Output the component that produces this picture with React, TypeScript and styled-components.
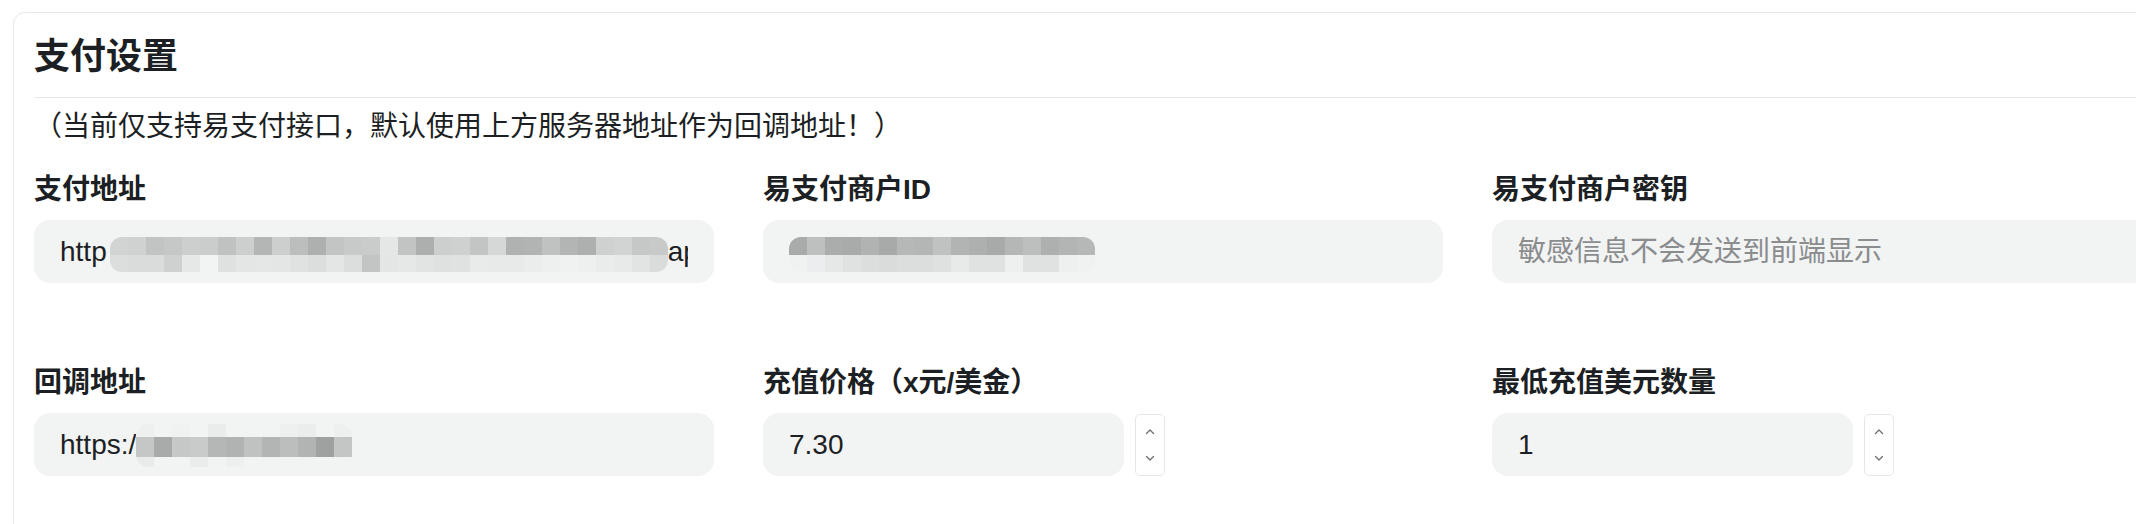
import React from "react";
import styled, { createGlobalStyle } from "styled-components";

const Global = createGlobalStyle`
  html, body { margin: 0; padding: 0; background: #ffffff; overflow: hidden; }
  body { font-family: "Liberation Sans", "Noto Sans CJK SC", sans-serif; color: #1c1f23; }
  * { box-sizing: border-box; }
`;

const Page = styled.div`
  padding: 12px 0 0 13px;
  width: 2136px;
  height: 524px;
  overflow: hidden;
`;

const Card = styled.section`
  width: 2200px;
  border: 1px solid #e8e8e8;
  border-radius: 12px;
  padding: 19px 20px 120px 20px;
  background: #fff;
`;

const Header = styled.div`
  border-bottom: 1px solid #e8e8e8;
  padding-bottom: 15px;
`;

const Title = styled.h2`
  margin: 0;
  font-family: "Liberation Sans", "Noto Sans CJK SC", sans-serif;
  font-size: 36px;
  line-height: 50px;
  font-weight: 700;
  color: #1c1f23;
`;

const Note = styled.p`
  margin: 9px 0 23px 0;
  font-size: 28px;
  line-height: 40px;
  color: #1c1f23;
`;

const Grid = styled.div`
  display: grid;
  grid-template-columns: repeat(3, 680px);
  column-gap: 49px;
  row-gap: 80px;
`;

const Field = styled.div`
  display: flex;
  flex-direction: column;
`;

const Label = styled.label`
  font-size: 28px;
  line-height: 40px;
  font-weight: 700;
  color: #1c1f23;
  margin-bottom: 10px;
`;

const fieldBox = `
  height: 63px;
  border: none;
  outline: none;
  border-radius: 16px;
  background: #f2f3f3;
  padding: 0 26px;
  font-family: "Liberation Sans", "Noto Sans CJK SC", sans-serif;
  font-size: 28px;
  color: #1c1f23;
`;

const TextInput = styled.input<{ $width?: number }>`
  ${fieldBox}
  width: ${(p) => (p.$width ? `${p.$width}px` : "100%")};
  &::placeholder {
    color: #8a8c8e;
  }
`;

/* read-only display of a value whose middle part is redacted (mosaic) */
const ValueBox = styled.div`
  ${fieldBox}
  width: 100%;
  display: flex;
  align-items: center;
`;

const ValueInner = styled.div`
  display: flex;
  align-items: center;
  width: 100%;
  height: 100%;
  overflow: hidden;
  white-space: nowrap;
`;

const ValueText = styled.span`
  flex: none;
`;

const NumberRow = styled.div`
  display: flex;
  align-items: center;
  gap: 11px;
`;

const Spinner = styled.div`
  width: 30px;
  height: 62px;
  border: 1px solid #e6e7e8;
  border-radius: 5px;
  display: flex;
  flex-direction: column;
  align-items: center;
  justify-content: space-between;
  padding: 13px 0 13px 0;
  color: #6b6e72;
`;

const MosaicBox = styled.div<{ $ml: number; $dy: number }>`
  flex: none;
  display: flex;
  flex-direction: column;
  margin-left: ${(p) => p.$ml}px;
  transform: translateY(${(p) => p.$dy}px);
  border-radius: 12px;
  overflow: hidden;
`;

const MosaicRow = styled.div<{ $h: number }>`
  display: flex;
  height: ${(p) => p.$h}px;
`;

const Cell = styled.span<{ $w: number }>`
  display: block;
  flex: none;
  width: ${(p) => p.$w}px;
  height: 100%;
`;

type MosaicProps = { rows: string[][]; heights: number[]; cell: number; ml?: number; dy?: number };

const Mosaic = ({ rows, heights, cell, ml = 0, dy = 0 }: MosaicProps) => (
  <MosaicBox $ml={ml} $dy={dy} aria-hidden>
    {rows.map((r, i) => (
      <MosaicRow key={i} $h={heights[i]}>
        {r.map((c, j) => (
          <Cell key={j} $w={cell} style={{ background: c }} />
        ))}
      </MosaicRow>
    ))}
  </MosaicBox>
);

const Chevron = ({ up }: { up?: boolean }) => (
  <svg width="10" height="7" viewBox="0 0 10 7" fill="none">
    <path
      d={up ? "M1.5 5.5 L5 2 L8.5 5.5" : "M1.5 1.5 L5 5 L8.5 1.5"}
      stroke="currentColor"
      strokeWidth="1.3"
      strokeLinecap="round"
      strokeLinejoin="round"
    />
  </svg>
);

const NumberField = ({ value }: { value: string }) => (
  <NumberRow>
    <TextInput $width={361} readOnly value={value} />
    <Spinner>
      <Chevron up />
      <Chevron />
    </Spinner>
  </NumberRow>
);

const payTop = [
  "#d2d3d3", "#d0d1d1", "#c2c3c3", "#c6c8c7", "#cdcece", "#cbcccc", "#c0c1c1", "#cdcece",
  "#b4b5b5", "#cdcece", "#bcbdbd", "#aeafaf", "#c3c4c4", "#c8c9c9", "#cacbcb", "#e5e6e6",
  "#c2c3c3", "#adaeae", "#cdcece", "#cfd0d0", "#c3c4c4", "#d6d7d7", "#b0b1b1", "#b2b3b3",
  "#c0c1c1", "#b3b4b4", "#aeafaf", "#cfd0d0", "#d2d3d3", "#c6c7c7", "#c8c9c9",
];
const payBottom = [
  "#dcdddd", "#dadbdb", "#dadbdb", "#cfd0d0", "#e6e7e7", "#f2f3f3", "#dfe0e0", "#e4e5e5",
  "#e5e6e6", "#e4e5e5", "#e0e1e1", "#dcdddd", "#e4e5e5", "#dcdddd", "#c3c4c4", "#e4e5e5",
  "#e6e7e7", "#e2e3e3", "#dfe0e0", "#e0e1e1", "#e9eaea", "#e8e9e9", "#e8e9e9", "#ebecec",
  "#eeefef", "#f0f1f1", "#eef0ef", "#eaebeb", "#e8e9e9", "#e2e3e3", "#dadbdb",
];
const idTop = [
  "#a9aaaa", "#bebfbf", "#abacac", "#a9aaaa", "#b1b2b2", "#a8a9a9", "#b6b7b7", "#b4b5b5",
  "#c0c1c1", "#b2b3b3", "#aeafaf", "#a8a9a9", "#b5b6b6", "#bdbebe", "#aeafaf", "#b3b4b4",
  "#b6b7b7",
];
const idBottom = [
  "#f0f1f1", "#ecedee", "#e6e7e7", "#e0e1e1", "#dcdddd", "#dadbdb", "#dcdddd", "#dcdddd",
  "#dfe0e0", "#e8e9e9", "#e0e1e1", "#e0e1e1", "#eeefef", "#e0e1e1", "#e0e1e1", "#eeefef",
  "#f0f1f1",
];
const cbFringeTop = [
  "#eeefef", "#f2f3f3", "#f0f1f1", "#f2f3f3", "#eaebeb", "#f2f3f3", "#f2f3f3", "#f2f3f3",
  "#eeefef", "#ebecec", "#f2f3f3", "#eeefef",
];
const cbMain = [
  "#c5c6c6", "#a9aaaa", "#c6c7c7", "#c9caca", "#b5b6b6", "#b1b2b2", "#c0c1c1", "#b3b4b4",
  "#bcbdbd", "#b2b3b3", "#9fa0a0", "#c4c5c5",
];
const cbFringeBottom = [
  "#e9eaea", "#f2f3f3", "#f2f3f3", "#eaebeb", "#f2f3f3", "#eeefef", "#f2f3f3", "#f2f3f3",
  "#f2f3f3", "#f2f3f3", "#f2f3f3", "#f2f3f3",
];

export default function App() {
  return (
    <>
      <Global />
      <Page>
        <Card>
          <Header>
            <Title>支付设置</Title>
          </Header>
          <Note>（当前仅支持易支付接口，默认使用上方服务器地址作为回调地址！）</Note>
          <Grid>
            <Field>
              <Label>支付地址</Label>
              <ValueBox>
                <ValueInner>
                  <ValueText>http</ValueText>
                  <Mosaic rows={[payTop, payBottom]} heights={[18, 17]} cell={18} ml={3} dy={3} />
                  <ValueText>ap</ValueText>
                </ValueInner>
              </ValueBox>
            </Field>
            <Field>
              <Label>易支付商户ID</Label>
              <ValueBox>
                <ValueInner>
                  <Mosaic rows={[idTop, idBottom]} heights={[18, 17]} cell={18} dy={3} />
                </ValueInner>
              </ValueBox>
            </Field>
            <Field>
              <Label>易支付商户密钥</Label>
              <TextInput readOnly placeholder="敏感信息不会发送到前端显示" />
            </Field>
            <Field>
              <Label>回调地址</Label>
              <ValueBox>
                <ValueInner>
                  <ValueText>https:/</ValueText>
                  <Mosaic
                    rows={[cbFringeTop, cbMain, cbFringeBottom]}
                    heights={[13, 20, 10]}
                    cell={18}
                    dy={1}
                  />
                </ValueInner>
              </ValueBox>
            </Field>
            <Field>
              <Label>充值价格（x元/美金）</Label>
              <NumberField value="7.30" />
            </Field>
            <Field>
              <Label>最低充值美元数量</Label>
              <NumberField value="1" />
            </Field>
          </Grid>
        </Card>
      </Page>
    </>
  );
}
